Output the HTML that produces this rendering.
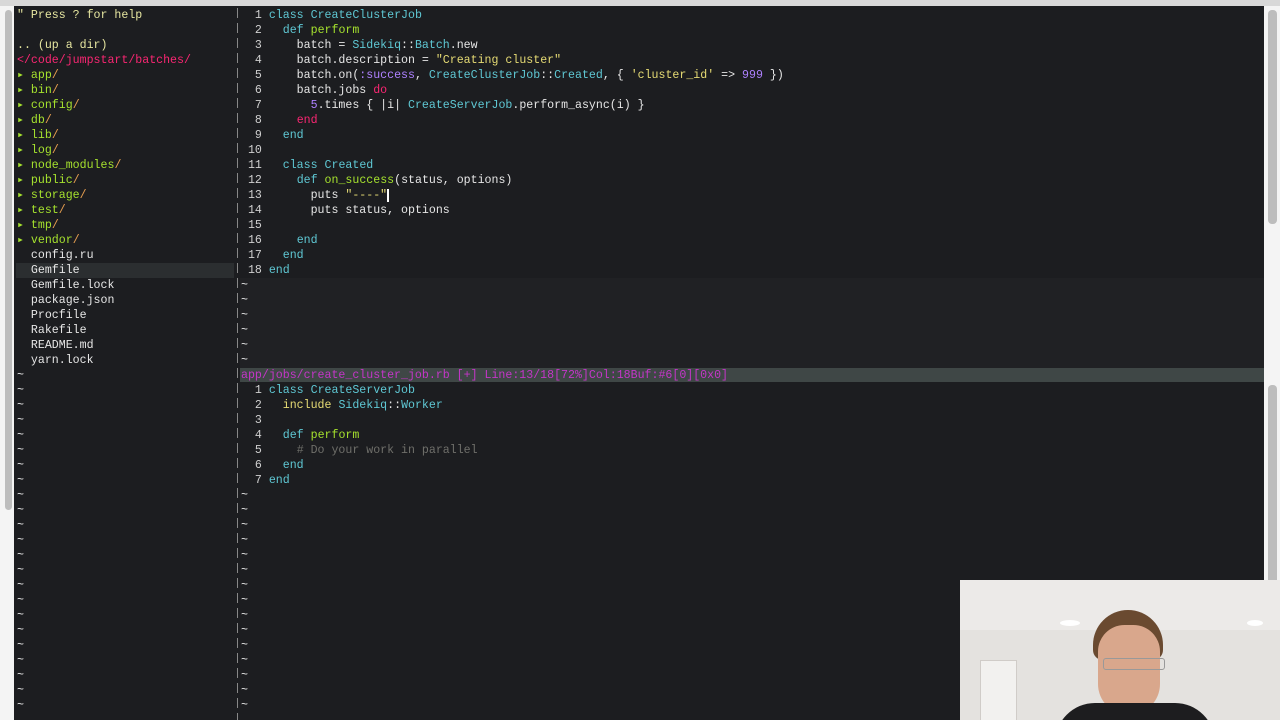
<!DOCTYPE html>
<html><head><meta charset="utf-8"><style>
body{margin:0;width:1280px;height:720px;overflow:hidden;background:#1c1d20;position:relative;font-family:"Liberation Mono",monospace;font-size:11.6px;}
.a{position:absolute}
pre{margin:0;font:inherit;line-height:15px;color:#e6e6e6;position:absolute;white-space:pre}
.k{color:#5fc8d4}.c{color:#5fc8d4}.f{color:#a6e22e}.r{color:#f92672}.s{color:#e6db74}.p{color:#ae81ff}.m{color:#6f6f6a}.n{color:#d0d0d0}.g{color:#a6e22e}.o{color:#e8a050}.y{color:#e6e6a0}
</style></head><body>
<div class="a" style="left:0;top:0;width:1280px;height:6px;background:#d8d8d8"></div>
<div class="a" style="left:0;top:6px;width:14px;height:714px;background:#f4f4f4"></div>
<div class="a" style="left:5px;top:10px;width:7px;height:500px;border-radius:4px;background:#bdbdbd"></div>
<div class="a" style="left:1264px;top:6px;width:16px;height:714px;background:#f4f4f4"></div>
<div class="a" style="left:1268px;top:10px;width:9px;height:214px;border-radius:4px;background:#bdbdbd"></div>
<div class="a" style="left:1268px;top:385px;width:9px;height:200px;border-radius:4px;background:#bdbdbd"></div>
<div class="a" style="left:240px;top:278px;width:1024px;height:90px;background:#202124"></div>
<div class="a" style="left:16px;top:263px;width:218px;height:15px;background:#2b2e30"></div>
<div class="a" style="left:237px;top:8px;width:1px;height:712px;background:repeating-linear-gradient(#888 0 10px,transparent 10px 15px)"></div>
<div class="a" style="left:240px;top:368px;width:1024px;height:14px;background:#3f4746"></div>
<pre style="left:17px;top:8px"><span class="y">" Press ? for help</span>

<span class="y">.. (up a dir)</span>
<span class="r">&lt;/code/jumpstart/batches/</span>
<span class="g">▸ app</span><span class="o">/</span>
<span class="g">▸ bin</span><span class="o">/</span>
<span class="g">▸ config</span><span class="o">/</span>
<span class="g">▸ db</span><span class="o">/</span>
<span class="g">▸ lib</span><span class="o">/</span>
<span class="g">▸ log</span><span class="o">/</span>
<span class="g">▸ node_modules</span><span class="o">/</span>
<span class="g">▸ public</span><span class="o">/</span>
<span class="g">▸ storage</span><span class="o">/</span>
<span class="g">▸ test</span><span class="o">/</span>
<span class="g">▸ tmp</span><span class="o">/</span>
<span class="g">▸ vendor</span><span class="o">/</span>
  config.ru
  Gemfile
  Gemfile.lock
  package.json
  Procfile
  Rakefile
  README.md
  yarn.lock
~
~
~
~
~
~
~
~
~
~
~
~
~
~
~
~
~
~
~
~
~
~
~
</pre>
<pre style="left:241px;top:8px"><span class="n">  1 </span><span class="k">class</span> <span class="c">CreateClusterJob</span>
<span class="n">  2 </span>  <span class="k">def</span> <span class="f">perform</span>
<span class="n">  3 </span>    batch = <span class="c">Sidekiq</span>::<span class="c">Batch</span>.new
<span class="n">  4 </span>    batch.description = <span class="s">"Creating cluster"</span>
<span class="n">  5 </span>    batch.on(<span class="p">:success</span>, <span class="c">CreateClusterJob</span>::<span class="c">Created</span>, { <span class="s">'cluster_id'</span> =&gt; <span class="p">999</span> })
<span class="n">  6 </span>    batch.jobs <span class="r">do</span>
<span class="n">  7 </span>      <span class="p">5</span>.times { |i| <span class="c">CreateServerJob</span>.perform_async(i) }
<span class="n">  8 </span>    <span class="r">end</span>
<span class="n">  9 </span>  <span class="k">end</span>
<span class="n"> 10 </span>
<span class="n"> 11 </span>  <span class="k">class</span> <span class="c">Created</span>
<span class="n"> 12 </span>    <span class="k">def</span> <span class="f">on_success</span>(status, options)
<span class="n"> 13 </span>      puts <span class="s">"----"</span><span style="border-left:2px solid #fff"></span>
<span class="n"> 14 </span>      puts status, options
<span class="n"> 15 </span>
<span class="n"> 16 </span>    <span class="k">end</span>
<span class="n"> 17 </span>  <span class="k">end</span>
<span class="n"> 18 </span><span class="k">end</span>
~
~
~
~
~
~
<span style="color:#c436c8">app/jobs/create_cluster_job.rb [+] Line:13/18[72%]Col:18Buf:#6[0][0x0]</span>
<span class="n">  1 </span><span class="k">class</span> <span class="c">CreateServerJob</span>
<span class="n">  2 </span>  <span class="s">include</span> <span class="c">Sidekiq</span>::<span class="c">Worker</span>
<span class="n">  3 </span>
<span class="n">  4 </span>  <span class="k">def</span> <span class="f">perform</span>
<span class="n">  5 </span>    <span class="m"># Do your work in parallel</span>
<span class="n">  6 </span>  <span class="k">end</span>
<span class="n">  7 </span><span class="k">end</span>
~
~
~
~
~
~
~
~
~
~
~
~
~
~
~
</pre>
<div class="a" style="left:960px;top:580px;width:320px;height:140px;background:#e4e2df;overflow:hidden">
<div class="a" style="left:0;top:0;width:320px;height:50px;background:#eceae8"></div>
<div class="a" style="left:100px;top:40px;width:20px;height:6px;border-radius:50%;background:#fff"></div>
<div class="a" style="left:287px;top:40px;width:16px;height:6px;border-radius:50%;background:#fff"></div>
<div class="a" style="left:20px;top:80px;width:35px;height:60px;background:#f2f1ef;border:1px solid #d0ccc8"></div>
<div class="a" style="left:133px;top:30px;width:70px;height:50px;border-radius:35px 35px 10px 10px;background:#6a4a30"></div>
<div class="a" style="left:138px;top:45px;width:62px;height:90px;border-radius:30px 30px 35px 35px;background:#d9a78c"></div>
<div class="a" style="left:143px;top:78px;width:60px;height:10px;border:1px solid #999;border-radius:3px"></div>
<div class="a" style="left:95px;top:123px;width:160px;height:40px;border-radius:40px 40px 0 0;background:#1d1d1f"></div>
</div>
</body></html>
